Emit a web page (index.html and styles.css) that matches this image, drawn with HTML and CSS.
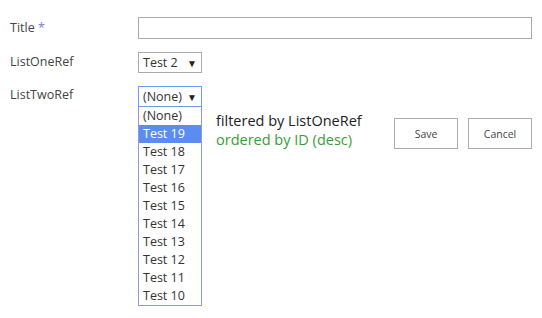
FILE: index.html
```html
<!DOCTYPE html>
<html lang="en">
<head>
    <meta charset="UTF-8">
    <title>New Item</title>
    <link rel="stylesheet" href="styles.css">
</head>
<body>
    <div class="form">
        <div class="row row-title">
            <div class="label">Title <span class="req">*</span></div>
            <div class="field"><div class="text-input"></div></div>
        </div>
        <div class="row row-one">
            <div class="label">ListOneRef</div>
            <div class="field">
                <div class="select"><span>Test 2</span><span class="arrow">&#9660;</span></div>
            </div>
        </div>
        <div class="row row-two">
            <div class="label">ListTwoRef</div>
            <div class="field">
                <div class="select focused"><span>(None)</span><span class="arrow">&#9660;</span></div>
                <div class="listbox">
                    <div class="opt">(None)</div>
                    <div class="opt active">Test 19</div>
                    <div class="opt">Test 18</div>
                    <div class="opt">Test 17</div>
                    <div class="opt">Test 16</div>
                    <div class="opt">Test 15</div>
                    <div class="opt">Test 14</div>
                    <div class="opt">Test 13</div>
                    <div class="opt">Test 12</div>
                    <div class="opt">Test 11</div>
                    <div class="opt">Test 10</div>
                </div>
            </div>
        </div>
        <div class="row-footer">
            <div class="note">
                <div>filtered by ListOneRef</div>
                <div class="order">ordered by ID (desc)</div>
            </div>
            <div class="buttons">
                <button>Save</button>
                <button>Cancel</button>
            </div>
        </div>
    </div>
</body>
</html>
```

FILE: styles.css
```css
html, body {
    height: 100%;
}

body {
    margin: 0;
    min-height: 318px;
    font-family: 'Open Sans', 'Noto Sans', sans-serif;
    color: #444;
    background: #fff;
}

.form {
    padding: 17px 10px 0 10px;
    width: 522px;
    min-height: 300px;
}

.row {
    display: flex;
    align-items: flex-start;
}

.label {
    width: 128px;
    font-size: 12.5px;
    line-height: 18px;
    color: #444;
}

.req {
    color: #7a80d0;
}

.field {
    position: relative;
    flex: 1;
}

.row-title .label {
    padding-top: 2px;
}

.text-input {
    width: 392px;
    height: 20px;
    border: 1px solid #ababab;
}

.row-one {
    margin-top: 13px;
}

.row-one .label {
    padding-top: 1px;
}

.row-two {
    margin-top: 13px;
}

.select {
    height: 19px;
    border: 1px solid #ababab;
    display: flex;
    justify-content: space-between;
    align-items: center;
    font-size: 12.5px;
    color: #333;
    padding: 0 0 0 4px;
    width: 58px;
}

.select.focused {
    border-color: #6d9bef;
}

.arrow {
    font-size: 10px;
    color: #222;
    margin-right: 4px;
}

.listbox {
    position: absolute;
    top: 21px;
    left: 0;
    width: 62px;
    border: 1px solid #8e9bd6;
    border-top: none;
    background: #fff;
    z-index: 2;
}

.opt {
    height: 18px;
    line-height: 18px;
    padding-left: 4px;
    font-size: 12.5px;
    color: #333;
}

.opt.active {
    background: #5b8cf0;
    color: #fff;
}

.row-footer {
    display: flex;
    justify-content: space-between;
    margin-top: 4px;
    padding-left: 206px;
}

.note {
    font-size: 14.5px;
    line-height: 19px;
    color: #222;
}

.order {
    color: #34a034;
}

.buttons {
    display: flex;
    gap: 10px;
    padding-top: 7px;
}

button {
    font-family: 'Open Sans', 'Noto Sans', sans-serif;
    font-size: 10.5px;
    color: #444;
    background: #fff;
    border: 1px solid #ababab;
    width: 64px;
    height: 31px;
    padding: 0;
}
```
